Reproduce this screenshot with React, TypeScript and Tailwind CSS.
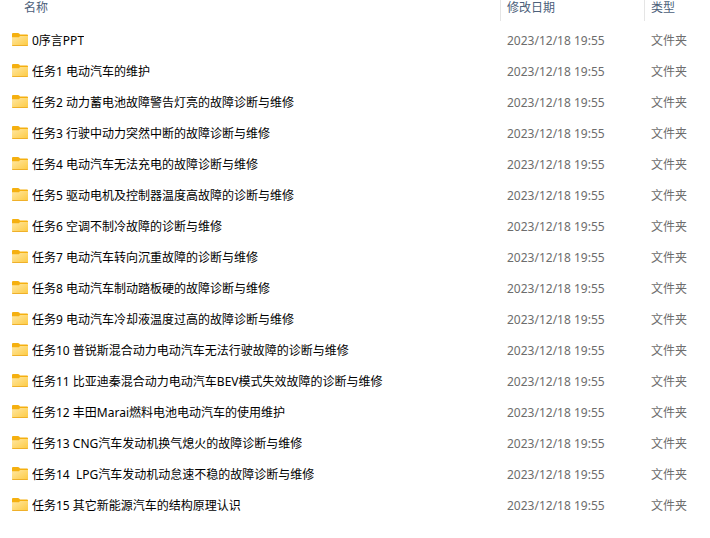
import React from 'react';

interface FolderEntry {
  name: string;
  modified: string;
  kind: string;
}

const NAMES = [
  '0序言PPT',
  '任务1 电动汽车的维护',
  '任务2 动力蓄电池故障警告灯亮的故障诊断与维修',
  '任务3 行驶中动力突然中断的故障诊断与维修',
  '任务4 电动汽车无法充电的故障诊断与维修',
  '任务5 驱动电机及控制器温度高故障的诊断与维修',
  '任务6 空调不制冷故障的诊断与维修',
  '任务7 电动汽车转向沉重故障的诊断与维修',
  '任务8 电动汽车制动踏板硬的故障诊断与维修',
  '任务9 电动汽车冷却液温度过高的故障诊断与维修',
  '任务10 普锐斯混合动力电动汽车无法行驶故障的诊断与维修',
  '任务11 比亚迪秦混合动力电动汽车BEV模式失效故障的诊断与维修',
  '任务12 丰田Marai燃料电池电动汽车的使用维护',
  '任务13 CNG汽车发动机换气熄火的故障诊断与维修',
  '任务14  LPG汽车发动机动怠速不稳的故障诊断与维修',
  '任务15 其它新能源汽车的结构原理认识',
];

const FOLDERS: FolderEntry[] = NAMES.map((name) => ({
  name,
  modified: '2023/12/18 19:55',
  kind: '文件夹',
}));

function FolderIcon() {
  return (
    <svg className="h-4 w-4 shrink-0" viewBox="0 0 16 16" aria-hidden="true">
      <path d="M0 1Q0 0 1 0H6Q6.7 0 7.2 0.6L8 1.6H15Q16 1.6 16 2.6V5H0Z" fill="#f5b010" />
      <path
        d="M0 4.2H6.4Q7 4.2 7.4 3.7L7.7 3.3Q8 3 8.5 3H16V12Q16 13 15 13H1Q0 13 0 12Z"
        fill="url(#folder-front)"
      />
      <path d="M0 12H16Q16 13 15 13H1Q0 13 0 12Z" fill="#efb02a" />
      <defs>
        <linearGradient id="folder-front" x1="0" y1="0" x2="1" y2="1">
          <stop offset="0" stopColor="#ffe7a2" />
          <stop offset="1" stopColor="#fdca41" />
        </linearGradient>
      </defs>
    </svg>
  );
}

export default function App() {
  return (
    <main className="min-h-screen bg-white font-['Noto_Sans','Noto_Sans_CJK_SC',sans-serif] text-xs text-black">
      <table className="w-full table-fixed border-collapse text-left">
        <colgroup>
          <col />
          <col className="w-36" />
          <col className="w-[66px]" />
        </colgroup>
        <thead className="text-[#4c607a]">
          <tr>
            <th scope="col" className="p-0 pb-1 font-normal">
              <div className="h-[21px] pl-6 leading-4">名称</div>
            </th>
            <th scope="col" className="p-0 pb-1 font-normal">
              <div className="h-[21px] border-l border-[#e5e5e5] pl-1.5 leading-4">修改日期</div>
            </th>
            <th scope="col" className="p-0 pb-1 font-normal">
              <div className="h-[21px] border-l border-[#e5e5e5] pl-1.5 leading-4">类型</div>
            </th>
          </tr>
        </thead>
        <tbody>
          {FOLDERS.map((folder) => (
            <tr key={folder.name} className="h-[31px]">
              <td className="p-0 pl-3">
                <div className="flex items-center gap-1">
                  <FolderIcon />
                  <span className="truncate whitespace-pre leading-4">{folder.name}</span>
                </div>
              </td>
              <td className="p-0 pl-[7px] leading-4 whitespace-nowrap text-[#6d6d6d]">{folder.modified}</td>
              <td className="p-0 pl-[7px] leading-4 whitespace-nowrap text-[#6d6d6d]">{folder.kind}</td>
            </tr>
          ))}
        </tbody>
      </table>
    </main>
  );
}
